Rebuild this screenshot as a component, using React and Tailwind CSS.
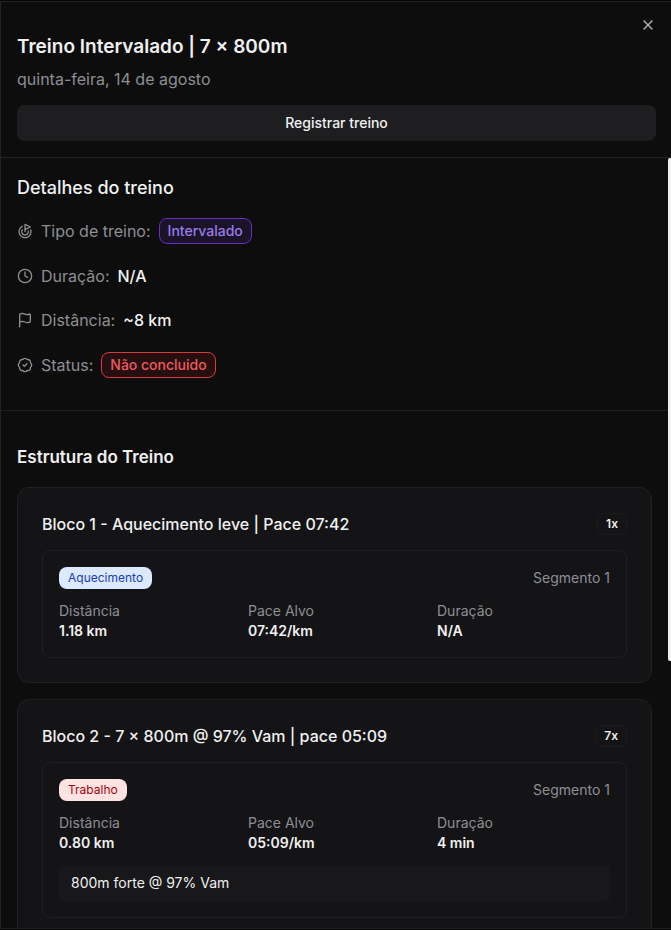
import { BadgeCheck, Clock, Flag, Goal, X } from "lucide-react";

const blocks = [
  {
    title: "Bloco 1 - Aquecimento leve | Pace 07:42",
    repeat: "1x",
    segments: [
      {
        kind: "Aquecimento",
        kindStyle: "bg-blue-100 text-blue-800",
        name: "Segmento 1",
        stats: [
          ["Distância", "1.18 km"],
          ["Pace Alvo", "07:42/km"],
          ["Duração", "N/A"],
        ],
      },
    ],
  },
  {
    title: "Bloco 2 - 7 × 800m @ 97% Vam | pace 05:09",
    repeat: "7x",
    segments: [
      {
        kind: "Trabalho",
        kindStyle: "bg-red-100 text-red-800",
        name: "Segmento 1",
        stats: [
          ["Distância", "0.80 km"],
          ["Pace Alvo", "05:09/km"],
          ["Duração", "4 min"],
        ],
        note: "800m forte @ 97% Vam",
      },
    ],
  },
];

function DetailRow({ icon: Icon, label, children }) {
  return (
    <div className="flex items-center gap-2">
      <Icon className="size-4 shrink-0 text-[#8e8e93]" strokeWidth={2} aria-hidden="true" />
      <dt className="text-[#8e8e93]">{label}</dt>
      <dd className="font-medium">{children}</dd>
    </div>
  );
}

function Pill({ className, children }) {
  return (
    <span className={`block rounded-lg border px-2 py-0.5 text-sm font-medium ${className}`}>
      {children}
    </span>
  );
}

function Segment({ segment }) {
  return (
    <div className="rounded-lg border border-[#1f1f21] p-4">
      <div className="mb-3 flex items-center justify-between">
        <span className={`rounded-lg px-2 py-[3px] text-xs ${segment.kindStyle}`}>
          <span className="px-px">{segment.kind}</span>
        </span>
        <span className="text-sm text-[#8e8e93]">{segment.name}</span>
      </div>
      <dl className="grid grid-cols-3 gap-4 text-sm">
        {segment.stats.map(([label, value]) => (
          <div key={label}>
            <dt className="text-[#8e8e93]">{label}</dt>
            <dd className="font-semibold">{value}</dd>
          </div>
        ))}
      </dl>
      {segment.note && (
        <p className="mt-3 rounded-sm bg-[#18181a] px-3 py-2 text-sm">{segment.note}</p>
      )}
    </div>
  );
}

function Block({ block }) {
  return (
    <article className="rounded-xl border border-[#202022] bg-[#141416] p-6">
      <div className="mb-[14px] flex items-center justify-between">
        <h4 className="text-base font-medium">{block.title}</h4>
        <span className="rounded-md border border-[#1b1b1d] px-2 py-0.5 text-xs font-semibold">
          {block.repeat}
        </span>
      </div>
      {block.segments.map((segment) => (
        <Segment key={segment.name} segment={segment} />
      ))}
    </article>
  );
}

export default function App() {
  return (
    <div className="h-screen bg-[#050505] py-px font-['Inter',sans-serif] text-[#f0f0f0]">
      <section
        role="dialog"
        aria-labelledby="workout-title"
        className="relative flex h-full flex-col overflow-hidden border-y border-l border-[#222223] bg-[#0d0d0d]"
      >
        <button
          type="button"
          aria-label="Fechar"
          className="absolute top-[15px] right-[15px] text-[#b4b4b4]"
        >
          <X className="size-4" strokeWidth={2} />
        </button>
        <header className="border-b border-[#222223] pt-[31px] pr-[15px] pb-4 pl-4">
          <h2 id="workout-title" className="text-[19px] leading-7 font-semibold">
            Treino Intervalado | 7 × 800m
          </h2>
          <p className="mt-1.5 text-base text-[#8e8e93]">quinta-feira, 14 de agosto</p>
          <button
            type="button"
            className="mt-3.5 h-9 w-full rounded-lg bg-[#1e1e20] text-sm font-medium"
          >
            Registrar treino
          </button>
        </header>
        <div className="flex min-h-0 flex-1">
          <div className="min-w-0 flex-1 overflow-hidden">
            <section className="border-b border-[#1f1f21] px-4 pt-4 pb-8">
              <h3 className="text-lg font-medium">Detalhes do treino</h3>
              <dl className="mt-4 flex flex-col gap-5">
                <DetailRow icon={Goal} label="Tipo de treino:">
                  <Pill className="border-[#6b2bc4] bg-[#1b1428] text-[#9a7be8]">Intervalado</Pill>
                </DetailRow>
                <DetailRow icon={Clock} label="Duração:">
                  N/A
                </DetailRow>
                <DetailRow icon={Flag} label="Distância:">
                  ~8 km
                </DetailRow>
                <DetailRow icon={BadgeCheck} label="Status:">
                  <Pill className="border-[#d93a3e] bg-[#260f11] text-[#ef5a5c]">
                    Não concluido
                  </Pill>
                </DetailRow>
              </dl>
            </section>
            <section className="px-4 py-8">
              <h3 className="text-[17px] leading-7 font-semibold">Estrutura do Treino</h3>
              <div className="mt-4 flex flex-col gap-4">
                {blocks.map((block) => (
                  <Block key={block.title} block={block} />
                ))}
              </div>
            </section>
          </div>
          <div className="w-[3px] shrink-0" aria-hidden="true">
            <div className="h-47/72 rounded-l-xs bg-[#f0f0f0]" />
          </div>
        </div>
      </section>
    </div>
  );
}
